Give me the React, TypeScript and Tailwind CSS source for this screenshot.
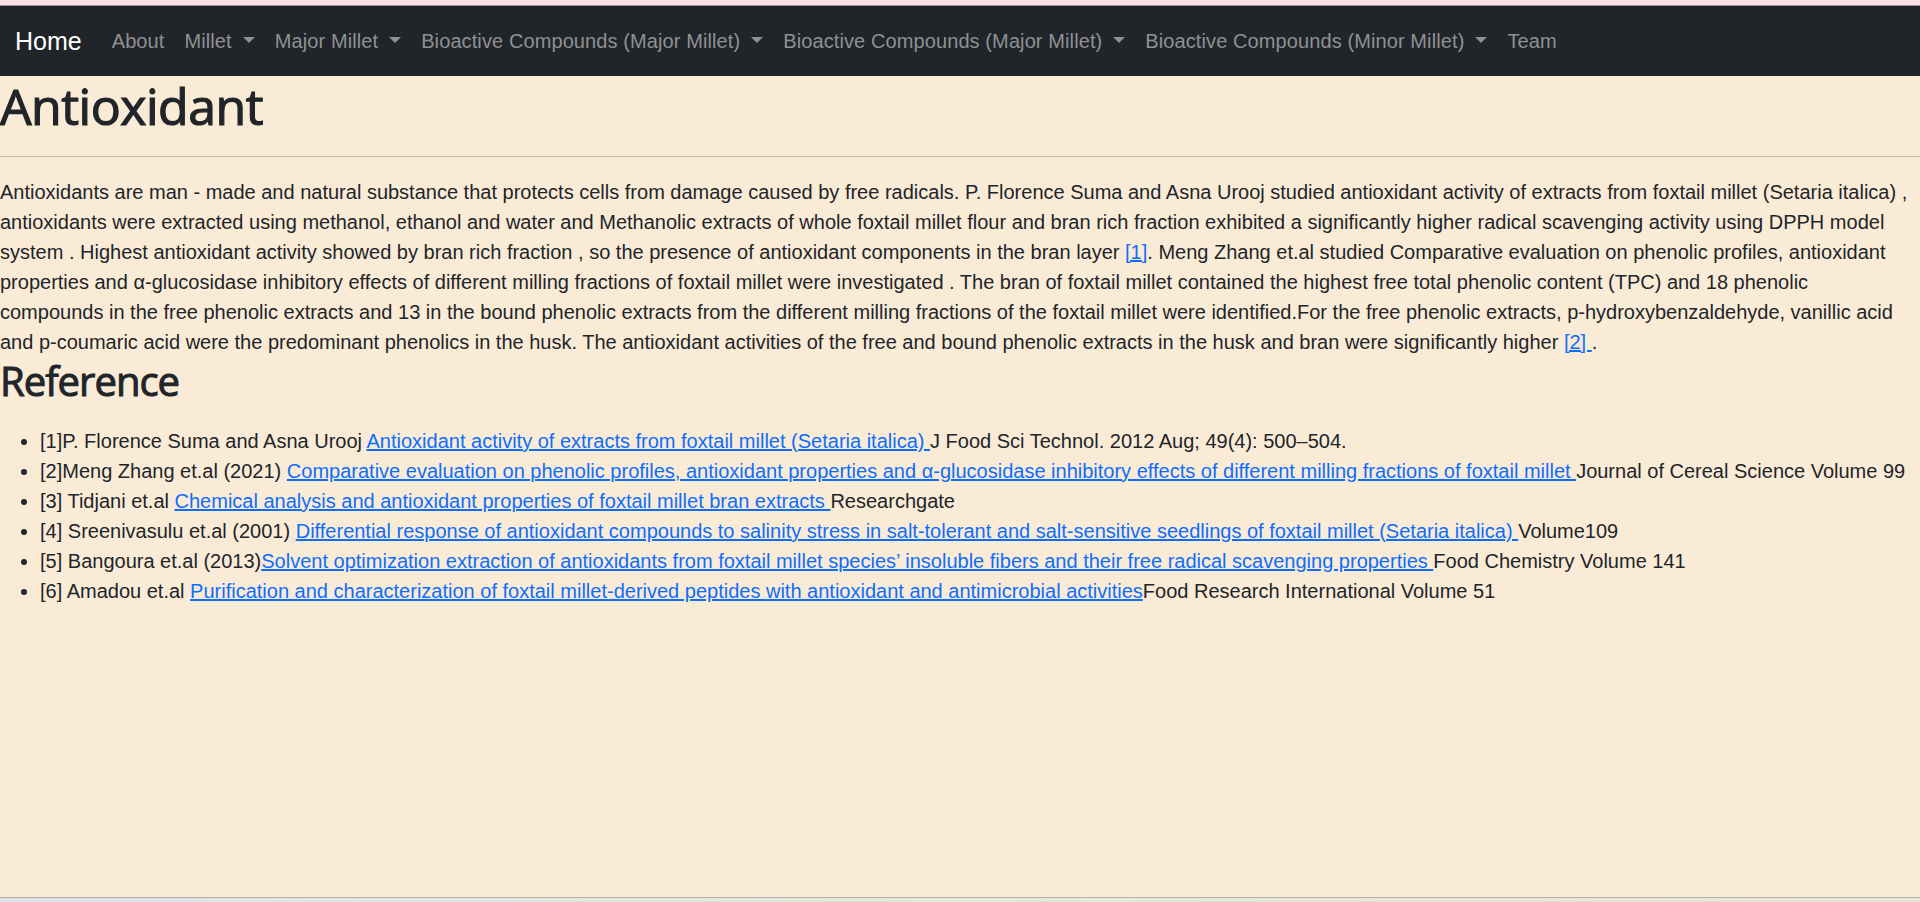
const navItems = [
  { label: "About", dropdown: false },
  { label: "Millet", dropdown: true },
  { label: "Major Millet", dropdown: true },
  { label: "Bioactive Compounds (Major Millet)", dropdown: true },
  { label: "Bioactive Compounds (Major Millet)", dropdown: true },
  { label: "Bioactive Compounds (Minor Millet)", dropdown: true },
  { label: "Team", dropdown: false },
];

const references = [
  {
    lead: "[1]P. Florence Suma and Asna Urooj ",
    title: "Antioxidant activity of extracts from foxtail millet (Setaria italica) ",
    tail: "J Food Sci Technol. 2012 Aug; 49(4): 500–504.",
  },
  {
    lead: "[2]Meng Zhang et.al (2021) ",
    title:
      "Comparative evaluation on phenolic profiles, antioxidant properties and α-glucosidase inhibitory effects of different milling fractions of foxtail millet ",
    tail: "Journal of Cereal Science Volume 99",
  },
  {
    lead: "[3] Tidjani et.al ",
    title: "Chemical analysis and antioxidant properties of foxtail millet bran extracts ",
    tail: "Researchgate",
  },
  {
    lead: "[4] Sreenivasulu et.al (2001) ",
    title:
      "Differential response of antioxidant compounds to salinity stress in salt-tolerant and salt-sensitive seedlings of foxtail millet (Setaria italica) ",
    tail: "Volume109",
  },
  {
    lead: "[5] Bangoura et.al (2013)",
    title:
      "Solvent optimization extraction of antioxidants from foxtail millet species’ insoluble fibers and their free radical scavenging properties ",
    tail: "Food Chemistry Volume 141",
  },
  {
    lead: "[6] Amadou et.al ",
    title: "Purification and characterization of foxtail millet-derived peptides with antioxidant and antimicrobial activities",
    tail: "Food Research International Volume 51",
  },
];

const Caret = () => (
  <span className="ml-[11px] inline-block align-[5px] border-x-[6px] border-t-[6px] border-x-transparent border-t-current" />
);

const App = () => {
  return (
    <div className="min-h-[902px] flex flex-col bg-[#faebd7] text-[#212529] text-[20px] leading-[30px] font-['Liberation_Sans',Arial,sans-serif]">
      <div className="h-[5px] bg-[#fde0e6]" />
      <div className="h-px bg-[#9a9a9a]" />
      <nav className="h-[70px] bg-[#212529] flex items-center px-[15px]">
        <a className="text-white text-[25px] leading-[37px] mr-[20px] py-[6px]">Home</a>
        <ul className="flex items-center">
          {navItems.map((item, i) => (
            <li key={i}>
              <a className="block px-[10px] py-[10px] text-[#8e9194] whitespace-nowrap tracking-[0.1px]">
                {item.label}
                {item.dropdown && <Caret />}
              </a>
            </li>
          ))}
        </ul>
      </nav>

      <main className="flex-1">
        <h1 className="font-['Open_Sans',sans-serif] text-[50px] leading-[60px] tracking-[-0.5px] [-webkit-text-stroke:1.2px_#212529] mb-[10px]">
          Antioxidant
        </h1>
        <hr className="my-[20px] border-t border-[#212529] opacity-25" />
        <p>
          Antioxidants are man - made and natural substance that protects cells from damage caused by free radicals. P.
          Florence Suma and Asna Urooj studied antioxidant activity of extracts from foxtail millet (Setaria italica) ,
          antioxidants were extracted using methanol, ethanol and water and Methanolic extracts of whole foxtail millet
          flour and bran rich fraction exhibited a significantly higher radical scavenging activity using DPPH model system
          . Highest antioxidant activity showed by bran rich fraction , so the presence of antioxidant components in the
          bran layer{" "}
          <a className="text-[#0d6efd] underline">[1]</a>. Meng Zhang et.al studied Comparative evaluation on phenolic
          profiles, antioxidant properties and α-glucosidase inhibitory effects of different milling fractions of foxtail
          millet were investigated . The bran of foxtail millet contained the highest free total phenolic content (TPC)
          and 18 phenolic
          <br />
          compounds in the free phenolic extracts and 13 in the bound phenolic extracts from the different milling
          fractions of the foxtail millet were identified.For the free phenolic extracts, p-hydroxybenzaldehyde, vanillic
          acid and p-coumaric acid were the predominant phenolics in the husk. The antioxidant activities of the free and
          bound phenolic extracts in the husk and bran were significantly higher{" "}
          <a className="text-[#0d6efd] underline">[2] </a>.
        </p>
        <h2 className="font-['Open_Sans',sans-serif] text-[40px] leading-[48px] tracking-[-1px] [-webkit-text-stroke:1px_#212529] mb-[21px]">
          Reference
        </h2>
        <ul className="list-disc pl-[40px] mb-[20px]">
          {references.map((ref, i) => (
            <li key={i}>
              {ref.lead}
              <a className="text-[#0d6efd] underline">{ref.title}</a>
              {ref.tail}
            </li>
          ))}
        </ul>
      </main>

      <div className="h-px bg-[#b5b0a8]" />
      <div className="h-[4px] bg-gradient-to-r from-[#dde3e8] via-[#e3ead8] to-[#e8e4d6]" />
    </div>
  );
};

export default App;
